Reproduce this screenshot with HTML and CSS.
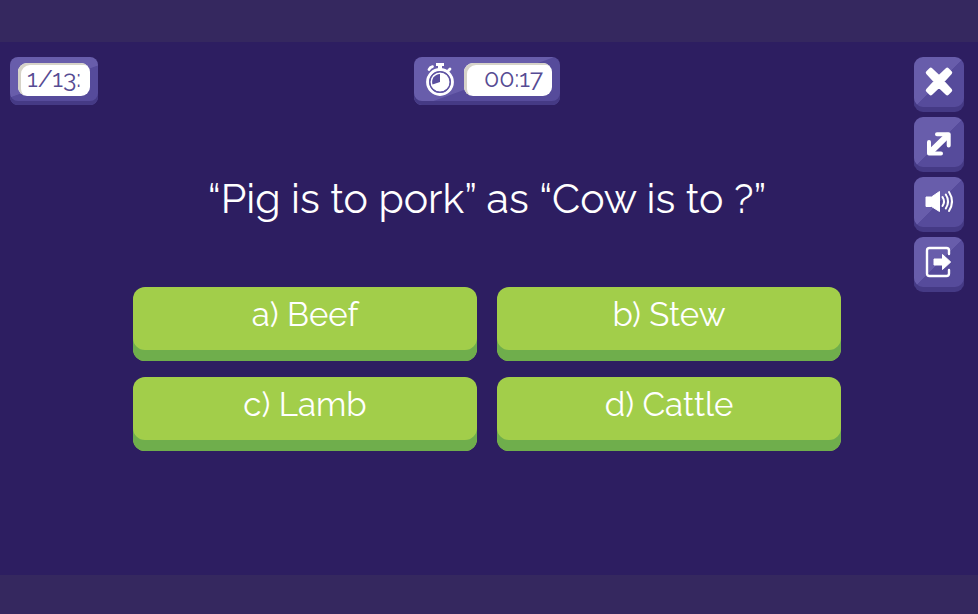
FILE: index.html
```html
<!DOCTYPE html>
<html lang="en">
<head>
<meta charset="utf-8">
<title>Quiz</title>
<link rel="stylesheet" href="styles.css">
</head>
<body>
<main class="stage">
  <div class="panel counter"><span class="well">1/13:</span></div>
  <div class="panel timer">
    <svg class="stopwatch" viewBox="0 0 28 34" aria-hidden="true">
      <path d="M10 1h8v3h-2v4h-4V4h-2z" fill="#fff"/>
      <path d="M3 7.500q1-2.200 3.500-2.800M22.500 8.500l1.500-1.500" fill="none" stroke="#fff" stroke-width="2.800" stroke-linecap="round"/>
      <circle cx="14" cy="20" r="12.400" fill="none" stroke="#fff" stroke-width="3"/>
      <circle cx="14" cy="20" r="9.900" fill="#fff"/>
      <circle cx="14" cy="20" r="10.200" fill="none" stroke="#5f54a3" stroke-width="1.300"/>
      <path d="M14 12v8l-7.500 2.500A8 8 0 0 1 14 12z" fill="#5a4f9f"/>
    </svg>
    <span class="well time">00:17</span>
  </div>
  <nav class="tools" aria-label="Game controls">
    <button class="tool" type="button" aria-label="Close">
      <svg viewBox="0 0 50 50"><path d="M13.800 15.700l3-3L25 20.500l8.200-7.800 3 3-8 8.800 8 8.800-3 3-8.200-7.800-8.200 7.800-3-3 8-8.800z" fill="#fff" stroke="#fff" stroke-width="4" stroke-linejoin="round"/></svg>
    </button>
    <button class="tool" type="button" aria-label="Full screen">
      <svg viewBox="0 0 50 50"><g fill="none" stroke="#fff" stroke-linecap="round" stroke-linejoin="round"><path d="M17 34.500L33 19" stroke-width="6"/><path d="M23 17.300h11.700v11.200M15 25v11.500h12" stroke-width="4"/></g></svg>
    </button>
    <button class="tool" type="button" aria-label="Sound">
      <svg viewBox="0 0 50 50"><path d="M12 20h5.500L25.500 14.500v20L17.500 29.500H12z" fill="#fff" stroke="#fff" stroke-linejoin="round"/><path d="M28.500 20q3 4.500 0 9M31.800 17.500q4.500 7 0 14M35 15q6 9.500 0 19" fill="none" stroke="#fff" stroke-width="2" stroke-linecap="round"/></svg>
    </button>
    <button class="tool" type="button" aria-label="Exit">
      <svg viewBox="0 0 50 50"><path d="M35 17v-3.500q0-2.500-2.500-2.500h-17Q13 11 13 13.500v23q0 2.500 2.500 2.500h17q2.500 0 2.500-2.500V33" fill="none" stroke="#fff" stroke-width="2.400" stroke-linecap="round"/><path d="M20 22h8.500v-4.500l8.200 7.500-8.200 7.500V28H20z" fill="#fff" stroke="#fff" stroke-linejoin="round"/></svg>
    </button>
  </nav>
  <h1 class="question">“Pig is to pork” as “Cow is to ?”</h1>
  <div class="answers">
    <button class="answer" type="button">a) Beef</button>
    <button class="answer" type="button">b) Stew</button>
    <button class="answer" type="button">c) Lamb</button>
    <button class="answer" type="button">d) Cattle</button>
  </div>
</main>
</body>
</html>
```
FILE: styles.css
```css
* { box-sizing: border-box; }

body {
  margin: 0;
  min-height: 100vh;
  display: flex;
  padding: 42px 0 39px;
  background: #35285f;
  color: #fff;
  font-family: Raleway, Lato, sans-serif;
}

.stage {
  flex: 1;
  display: grid;
  grid-template-columns: 1fr auto 1fr;
  grid-template-rows: 48px auto 1fr;
  align-items: start;
  padding: 15px 14px 0 10px;
  background: #2d1e61;
}

.panel {
  display: flex;
  align-items: center;
  gap: 10px;
  height: 48px;
  padding: 0 8px 4px;
  border-radius: 8px;
  background: linear-gradient(160deg, #685dab 50%, #564b9b 51%);
  box-shadow: inset 0 -4px #453a85;
}

.counter { justify-self: start; }

.well {
  padding: 0 9px 3px;
  border-radius: 9px;
  background: #fff;
  box-shadow: inset 3px 2px #d6d3c8;
  color: #564b93;
  font-size: 25px;
  line-height: 30px;
}

.timer { padding-left: 12px; }
.stopwatch { width: 28px; height: 34px; }
.time { padding-left: 20px; }

.tools {
  grid-area: 1 / 3 / span 3;
  justify-self: end;
  display: flex;
  flex-direction: column;
  gap: 5px;
}

.tool {
  width: 50px;
  height: 55px;
  padding: 0 0 5px;
  border: 0;
  border-radius: 9px;
  background: linear-gradient(135deg, #685dab 50%, #564b9b 51%) top / 50px 50px no-repeat #453a85;
  box-shadow: inset 0 -5px #453a85;
}

.tool svg { display: block; width: 50px; height: 50px; }

.question {
  grid-area: 2 / 1 / auto / span 3;
  justify-self: center;
  margin: 68px 0 62px;
  font-size: 41px;
  font-weight: 400;
  line-height: 52px;
}

.answers {
  grid-area: 3 / 1 / auto / span 3;
  justify-self: center;
  width: 100%;
  max-width: 708px;
  display: grid;
  grid-template-columns: 1fr 1fr;
  gap: 16px 20px;
}

.answer {
  padding: 8px 8px 26px;
  border: 0;
  border-radius: 12px;
  background: #a2ce4a;
  box-shadow: inset 0 -11px #6fae4c;
  color: #fff;
  font-family: inherit;
  font-size: 33px;
  line-height: 40px;
}
```
